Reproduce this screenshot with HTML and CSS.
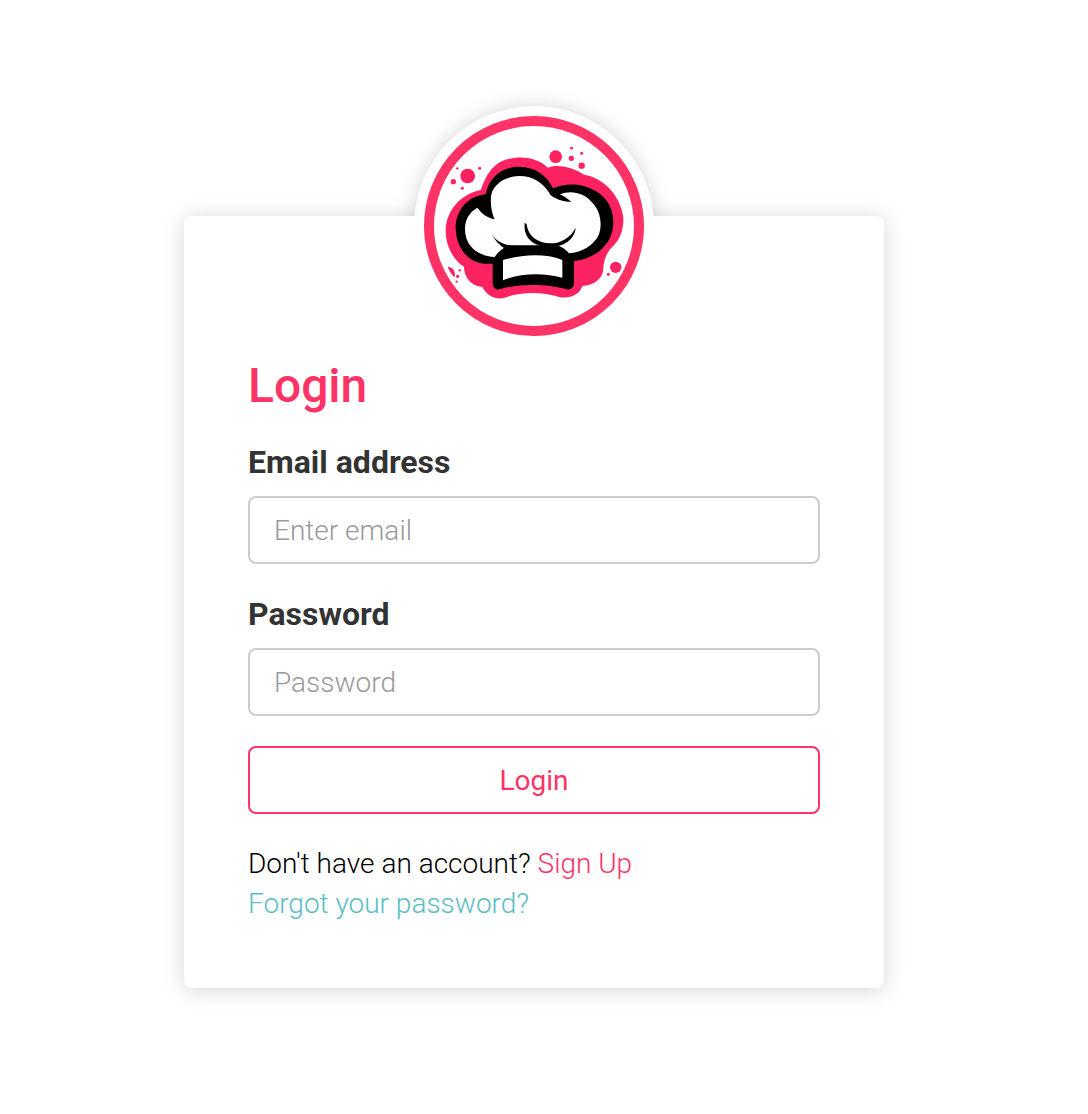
FILE: index.html
```html
<!DOCTYPE html>
<html lang="en">
<head>
    <meta charset="UTF-8">
    <meta name="viewport" content="width=device-width, initial-scale=1.0">
    <title>Login</title>
    <link rel="stylesheet" href="styles.css">
</head>
<body>
<div class="card">
    <div class="logo-disc"></div>
    <svg class="logo" viewBox="60 60 660 660" aria-hidden="true">
        <circle cx="390" cy="390" r="315" fill="#fff" stroke="#ff3366" stroke-width="30"/>
        <g fill="#ff2260">
            <path d="M270 212C300 180 385 170 432 215C455 205 500 210 540 236C600 245 650 300 658 365C660 410 640 440 622 455C605 475 600 495 598 515C600 545 570 570 535 570C525 600 490 612 455 600C400 585 340 590 300 606C270 612 245 595 235 572C205 572 180 545 180 512C150 495 125 450 125 405C125 350 165 295 230 282C240 255 250 230 270 212Z"/>
            <circle cx="455" cy="182" r="19"/>
            <circle cx="502" cy="187" r="8"/>
            <circle cx="503" cy="156" r="4.5"/>
            <circle cx="533" cy="172" r="4.5"/>
            <circle cx="533" cy="209" r="9.5"/>
            <circle cx="191" cy="240" r="22"/>
            <circle cx="148" cy="257" r="8"/>
            <circle cx="227" cy="217" r="4.5"/>
            <circle cx="160" cy="217" r="3.5"/>
            <circle cx="175" cy="277" r="4.5"/>
            <circle cx="635" cy="514" r="17"/>
            <circle cx="613" cy="535" r="4.5"/>
            <path d="M131 513C145 512 156 525 152 544C142 535 136 525 131 513Z"/>
            <circle cx="167" cy="523" r="3.5"/>
            <circle cx="161" cy="541" r="5"/>
            <circle cx="158" cy="557" r="3.5"/>
        </g>
        <path fill="#000" d="M245 295C255 240 300 211 345 212C395 212 430 240 447 277C480 262 530 258 575 285C620 310 635 360 625 405C615 450 570 490 510 495L510 560C510 575 500 582 488 580C430 563 340 563 287 580C275 582 266 575 266 560L266 503L240 503C190 500 155 450 155 395C155 345 190 300 245 295Z"/>
        <path fill="#fff" d="M183 400C183 370 195 350 220 335C235 355 250 365 272 370C262 350 258 320 262 295C270 262 310 240 345 240C390 240 420 262 440 298C460 312 480 318 502 318C490 308 480 300 468 295C500 282 540 290 565 320C590 345 595 385 585 415C570 450 530 470 495 472C480 455 470 450 450 448L320 448C300 452 285 465 272 483C220 480 183 450 183 400Z"/>
        <path fill="#000" d="M362 380C358 420 380 452 440 453C480 452 512 430 515 395C500 425 470 442 440 442C400 442 372 420 368 385Z"/>
        <path fill="#000" d="M263 413C275 435 295 445 330 450L300 456C285 445 270 430 263 413Z"/>
        <path fill="#fff" d="M297 492C350 477 420 470 475 492L475 545C420 530 350 530 297 553Z"/>
    </svg>

    <h1 class="title">Login</h1>
    <form class="login-form">
        <label class="field-label" for="email">Email address</label>
        <input class="field" type="email" id="email" placeholder="Enter email">

        <label class="field-label" for="password">Password</label>
        <input class="field" type="password" id="password" placeholder="Password">

        <button class="login-btn" type="button">Login</button>
    </form>
    <p class="links">
        Don't have an account? <a class="signup" href="#">Sign Up</a><br>
        <a class="forgot" href="#">Forgot your password?</a>
    </p>
</div>
</body>
</html>
```

FILE: styles.css
```css
body {
    font-family: Roboto, Arial, sans-serif;
    background-color: #ffffff;
    margin: 0;
    padding: 216px 20px 126px 0;
    display: flex;
    flex-direction: column;
    align-items: center;
}

.card {
    position: relative;
    box-sizing: border-box;
    width: 700px;
    height: 772px;
    padding: 138px 64px 0;
    background-color: #ffffff;
    border-radius: 8px;
    box-shadow: 0 2px 22px rgba(0, 0, 0, 0.17);
}

.logo-disc {
    position: absolute;
    top: -110px;
    left: 230px;
    width: 240px;
    height: 240px;
    border-radius: 50%;
    background-color: #ffffff;
    box-shadow: 0 0 20px rgba(0, 0, 0, 0.17);
    clip-path: inset(-30px -30px 130px -30px);
}

.logo {
    position: absolute;
    top: -100px;
    left: 240px;
    width: 220px;
    height: 220px;
}

.title {
    margin: 0 0 22px;
    font-size: 48px;
    line-height: 64px;
    font-weight: 500;
    color: #ff3366;
}

.login-form {
    display: flex;
    flex-direction: column;
}

.field-label {
    margin-bottom: 12px;
    font-size: 32px;
    line-height: 44px;
    font-weight: 700;
    color: #333333;
}

.field {
    box-sizing: border-box;
    width: 100%;
    height: 68px;
    margin-bottom: 28px;
    padding: 0 24px;
    font-family: Roboto, Arial, sans-serif;
    font-size: 28px;
    font-weight: 300;
    border: 2px solid #cccccc;
    border-radius: 8px;
    outline: none;
}

.field::placeholder {
    color: #999999;
    opacity: 1;
}

.login-btn {
    height: 68px;
    margin-top: 2px;
    font-family: Roboto, Arial, sans-serif;
    font-size: 28px;
    font-weight: 400;
    color: #ff3366;
    background-color: #ffffff;
    border: 2px solid #ff3366;
    border-radius: 8px;
    cursor: pointer;
}

.links {
    margin: 30px 0 0;
    font-size: 28px;
    line-height: 40px;
    font-weight: 300;
    color: #000000;
}

.links a {
    text-decoration: none;
}

.signup {
    color: #ff3366;
}

.forgot {
    color: #5bbdc4;
}
```
